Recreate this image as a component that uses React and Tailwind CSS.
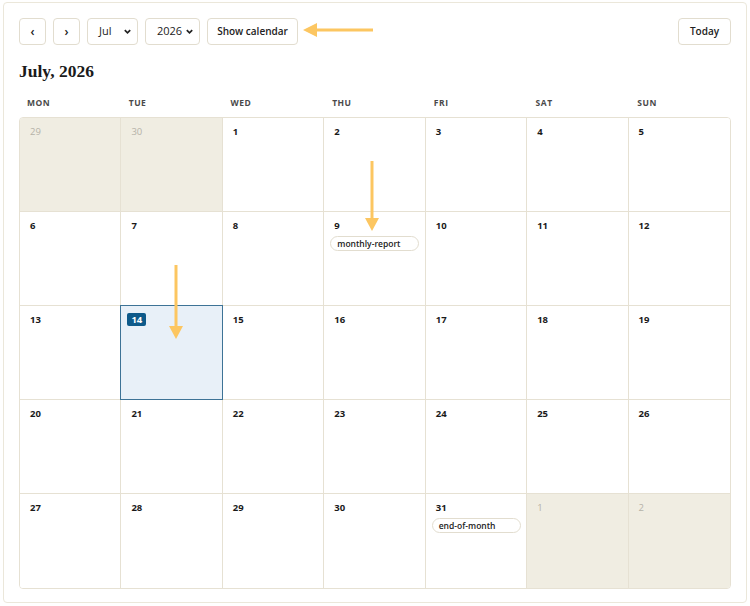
import React from "react";

const sans = { fontFamily: '"Open Sans", "Noto Sans", sans-serif' };

const weeks = [
  [29, 30, 1, 2, 3, 4, 5],
  [6, 7, 8, 9, 10, 11, 12],
  [13, 14, 15, 16, 17, 18, 19],
  [20, 21, 22, 23, 24, 25, 26],
  [27, 28, 29, 30, 31, 1, 2],
];

const events = { 9: "monthly-report", 31: "end-of-month" };

function Btn({ children, className = "" }) {
  return (
    <button
      className={
        "h-[27px] rounded-[4px] border border-[#e2ddcf] bg-white text-[10px] font-semibold text-[#222] " +
        className
      }
    >
      {children}
    </button>
  );
}

function Sel({ label, w }) {
  return (
    <div
      className={
        "flex h-[27px] items-center justify-between rounded-[4px] border border-[#e2ddcf] bg-white pl-[11px] pr-[5px] text-[11px] text-[#222] " +
        w
      }
    >
      <span>{label}</span>
      <svg width="9" height="9" viewBox="0 0 10 10">
        <path d="M2 3.5 L5 6.5 L8 3.5" fill="none" stroke="#222" strokeWidth="1.9" />
      </svg>
    </div>
  );
}

function ArrowDown({ x, y1, y2 }) {
  return (
    <svg
      className="pointer-events-none absolute"
      style={{ left: x - 8, top: y1 }}
      width="16"
      height={y2 - y1}
    >
      <line x1="8" y1="0" x2="8" y2={y2 - y1 - 10} stroke="#fcc661" strokeWidth="3" />
      <polygon points={`1,${y2 - y1 - 13} 15,${y2 - y1 - 13} 8,${y2 - y1}`} fill="#fcc661" />
    </svg>
  );
}

export default function App() {
  return (
    <div className="relative h-[606px] w-[750px] bg-white" style={sans}>
      <div className="absolute left-[3px] top-[2px] h-[601px] w-[744px] rounded-[4px] border border-[#ebe7da] bg-white px-[15px] pt-[15px]">
        <div className="flex items-center justify-between">
          <div className="flex items-center gap-[7px]">
            <Btn className="w-[27px] text-[12px]">‹</Btn>
            <Btn className="w-[27px] text-[12px]">›</Btn>
            <Sel label="Jul" w="w-[51px]" />
            <Sel label="2026" w="w-[55px]" />
            <Btn className="w-[91px]">Show calendar</Btn>
          </div>
          <Btn className="w-[53px]">Today</Btn>
        </div>

        <h1
          className="mt-[15px] text-[17.5px] font-bold leading-[22px] text-[#1a1a1a]"
          style={{ fontFamily: '"Liberation Serif", "DejaVu Serif", serif' }}
        >
          July, 2026
        </h1>

        <div className="mt-[14px] grid grid-cols-7 pb-[8px] text-[8.5px] leading-[13px]">
          {["MON", "TUE", "WED", "THU", "FRI", "SAT", "SUN"].map((d) => (
            <div key={d} className="pl-[8px] font-bold tracking-[0.06em] text-[#4a4a4a]">
              {d}
            </div>
          ))}
        </div>

        <div className="grid grid-cols-7 overflow-hidden rounded-[4px] border border-[#e6e1d3]">
          {weeks.map((week, wi) =>
            week.map((day, di) => {
              const outside = (wi === 0 && day > 20) || (wi === 4 && day < 10);
              const today = wi === 2 && day === 14;
              const border =
                (di < 6 ? " border-r border-r-[#e6e1d3]" : "") +
                (wi < 4 ? " border-b border-b-[#e6e1d3]" : "");
              return (
                <div
                  key={wi + "-" + di}
                  className={
                    "relative h-[94px] px-[10px] pt-[7px] text-[9.5px] leading-[13px]" +
                    border +
                    (outside ? " bg-[#f0ede2]" : " bg-white")
                  }
                >
                  {today && (
                    <div className="pointer-events-none absolute inset-[-1px] border border-[#3d7396] bg-[#e8f0f8]" />
                  )}
                  <div className="relative">
                    {today ? (
                      <span className="ml-[-4px] inline-block rounded-[2px] bg-[#0e5a8a] px-[4px] font-bold leading-[13px] text-white">
                        {day}
                      </span>
                    ) : (
                      <span
                        className={
                          outside ? "font-normal text-[#b5b2a8]" : "font-bold text-[#1a1a1a]"
                        }
                      >
                        {day}
                      </span>
                    )}
                    {!outside && events[day] && (
                      <div className="ml-[-4px] mt-[4px] h-[15px] w-[89px] rounded-full border border-[#e2ddcf] bg-white pl-[6px] text-[8.5px] font-semibold leading-[13px] text-[#222]">
                        {events[day]}
                      </div>
                    )}
                  </div>
                </div>
              );
            })
          )}
        </div>
      </div>

      {/* annotation arrows */}
      <svg className="pointer-events-none absolute left-[303px] top-[22px]" width="72" height="16">
        <line x1="12" y1="8" x2="70" y2="8" stroke="#fcc661" strokeWidth="3" />
        <polygon points="0,8 14,1 14,15" fill="#fcc661" />
      </svg>
      <ArrowDown x={372} y1={161} y2={231} />
      <ArrowDown x={176} y1={265} y2={339} />
    </div>
  );
}
